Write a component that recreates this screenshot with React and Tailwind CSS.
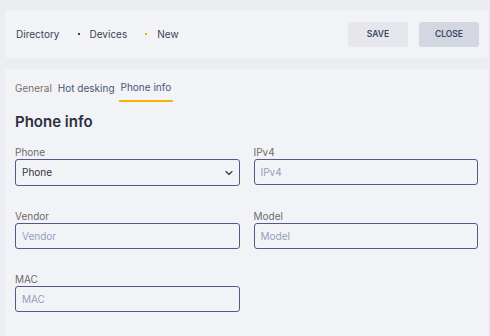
import React from 'react';
import { ChevronDown } from 'lucide-react';

const Field = ({ label, placeholder }) => (
  <div className="flex flex-col">
    <label className="mb-[1px] text-[10px] leading-[12px] text-[#6e6a6a]">{label}</label>
    <input
      placeholder={placeholder}
      className="h-[26px] w-full rounded-[3px] border border-[#525a85] bg-transparent px-[6px] text-[10px] text-[#2f3445] placeholder:text-[#93a0ba] outline-none"
    />
  </div>
);

const App = () => {
  return (
    <div
      className="min-h-screen w-[490px] h-[336px] overflow-hidden bg-[#ebedf2] pl-[5px] pr-[2px] pt-[10px]"
      style={{ fontFamily: 'Inter, "Open Sans", sans-serif' }}
    >
      {/* Header */}
      <div className="flex h-[48px] items-center justify-between rounded-[3px] bg-[#f2f3f7] pl-[11px] pr-[9px]">
        <div className="flex items-center text-[10px] text-[#3d4254]">
          <span>Directory</span>
          <span className="ml-[18px] mr-[10px] h-[2px] w-[2px] bg-[#3d4254]" />
          <span>Devices</span>
          <span className="ml-[18px] mr-[10px] h-[2px] w-[2px] bg-[#f5b301]" />
          <span>New</span>
        </div>
        <div className="flex items-center gap-[11px]">
          <button className="h-[25px] w-[60px] rounded-[3px] bg-[#e5e7ed] text-[8.5px] font-semibold text-[#3e4763]">
            SAVE
          </button>
          <button className="h-[25px] w-[60px] rounded-[3px] bg-[#d3d7e1] text-[8.5px] font-semibold text-[#3e4763]">
            CLOSE
          </button>
        </div>
      </div>

      {/* Body */}
      <div className="mt-[11px] h-[300px] rounded-t-[3px] bg-[#f2f3f7] px-[10px] pt-[11px]">
        <div className="flex items-end text-[10px] text-[#7a7066]">
          <span className="pb-[6px]">General</span>
          <span className="ml-[6px] pb-[6px] text-[#4a5575]">Hot desking</span>
          <span className="ml-[4px] border-b-2 border-[#f5b301] px-[2px] pb-[5px] text-[#4a5575]">Phone info</span>
        </div>

        <h2 className="mt-[10px] text-[15px] font-semibold leading-[20px] text-[#2b2f3d]">Phone info</h2>

        <div className="mt-[14px] grid grid-cols-2 gap-x-[14px] gap-y-[24px]">
          <div className="flex flex-col">
            <label className="mb-[1px] text-[10px] leading-[12px] text-[#6e6a6a]">Phone</label>
            <div className="flex h-[27px] items-center justify-between rounded-[3px] border border-[#525a85] pl-[6px] pr-[4px] text-[10px] text-[#2f3445]">
              <span>Phone</span>
              <ChevronDown className="h-[12px] w-[12px] text-[#2f3445]" strokeWidth={2.2} />
            </div>
          </div>
          <Field label="IPv4" placeholder="IPv4" />
          <Field label="Vendor" placeholder="Vendor" />
          <Field label="Model" placeholder="Model" />
          <Field label="MAC" placeholder="MAC" />
        </div>
      </div>
    </div>
  );
};

export default App;
